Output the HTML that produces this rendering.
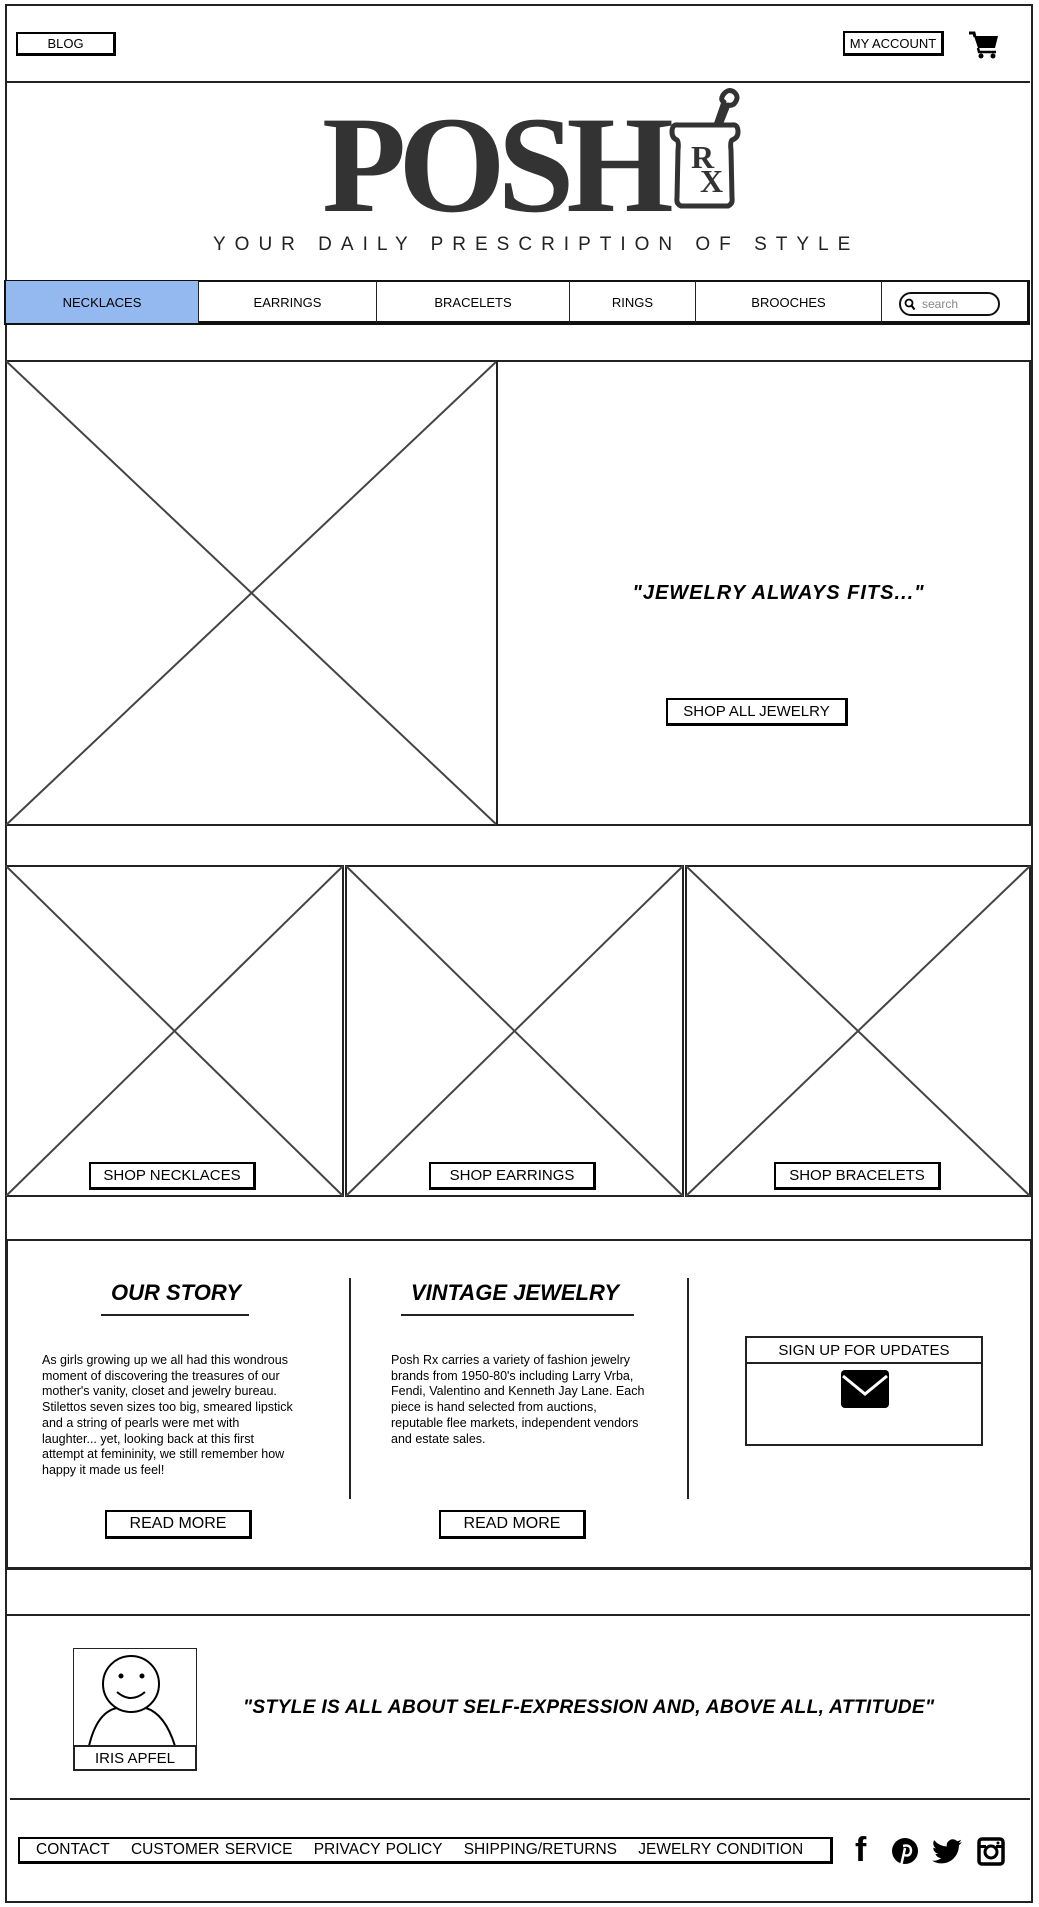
<!DOCTYPE html>
<html><head><meta charset="utf-8"><style>
*{margin:0;padding:0;box-sizing:border-box}
body{width:1039px;height:1907px;background:#fff;position:relative;overflow:hidden;font-family:"Liberation Sans",sans-serif;color:#000}
.a{position:absolute}
.btn{position:absolute;border:2px solid #000;border-right-width:3px;border-bottom-width:3px;background:#fff;display:flex;align-items:center;justify-content:center;font-size:15px;white-space:nowrap}
.box{position:absolute;border:2px solid #222}
.hl{position:absolute;height:2px;background:#222}
.nav{position:absolute;top:281px;height:42px;border-right:1.5px solid #222;display:flex;align-items:center;justify-content:center;font-size:13px}
p.t{position:absolute;font-size:12.5px;line-height:15.7px;white-space:nowrap}
</style></head><body>
<div class="a" style="left:5px;top:4px;width:1028px;height:1899px;border:2px solid #222"></div>

<div class="btn" style="left:16px;top:32px;width:100px;height:24px;font-size:13px">BLOG</div>
<div class="btn" style="left:843px;top:31px;width:101px;height:25px;font-size:13px">MY ACCOUNT</div>
<svg class="a" style="left:968px;top:31px" width="32" height="28" viewBox="0 0 32 28"><path d="M1 2h5l1 4" fill="none" stroke="#000" stroke-width="3"/><path d="M6 5h24l-3 12H10z" fill="#000"/><path d="M10 17l1 4h17" fill="none" stroke="#000" stroke-width="2.5"/><circle cx="13" cy="25" r="2.5" fill="#000"/><circle cx="25" cy="25" r="2.5" fill="#000"/></svg>
<div class="hl" style="left:5px;top:81px;width:1025px"></div>

<div class="a" style="left:322px;top:96px;font-family:'Liberation Serif',serif;font-weight:bold;font-size:138px;line-height:138px;color:#333;letter-spacing:-8px">POSH</div>
<svg class="a" style="left:660px;top:80px" width="100" height="140" viewBox="0 0 100 140">
<path d="M18 45 Q12 44 12 52 Q12 58 17 60 Q19 62 18 70 L17 118 Q16 124 21 126 L68 126 Q73 124 72 118 L71 70 Q70 62 72 60 Q78 58 78 52 Q78 44 72 45 L56 45 L64 22 Q60 20 63 15 Q68 8 74 12 Q80 17 74 24 Q71 26 68 25 L60 45 Z" fill="none" stroke="#333" stroke-width="5" stroke-linejoin="round"/>
<text x="31" y="88" font-family="Liberation Serif,serif" font-weight="bold" font-size="32" fill="#333">R</text>
<text x="40" y="112" font-family="Liberation Serif,serif" font-weight="bold" font-size="32" fill="#333">X</text>
</svg>
<div class="a" style="left:213px;top:234px;font-size:19px;letter-spacing:9px;color:#222;white-space:nowrap">YOUR DAILY PRESCRIPTION OF STYLE</div>

<div class="a" style="left:4px;top:280px;width:1026px;height:45px;border:2px solid #111;border-bottom-width:4px;border-right-width:3px"></div>
<div class="nav" style="left:6px;width:193px;background:#94b9f0">NECKLACES</div>
<div class="nav" style="left:199px;width:178px">EARRINGS</div>
<div class="nav" style="left:377px;width:193px">BRACELETS</div>
<div class="nav" style="left:570px;width:126px">RINGS</div>
<div class="nav" style="left:696px;width:186px">BROOCHES</div>
<div class="a" style="left:899px;top:292px;width:101px;height:24px;border:2px solid #111;border-radius:12px;font-size:12px;color:#888;padding:3px 0 0 21px">search</div>
<svg class="a" style="left:904px;top:298px" width="12" height="13"><circle cx="5" cy="5" r="3.5" fill="none" stroke="#000" stroke-width="1.8"/><path d="M7.5 7.5l3 4" stroke="#000" stroke-width="2"/></svg>

<svg class="a" style="left:0;top:0" width="1039" height="1907">
<g fill="none" stroke="#444" stroke-width="2">
<rect x="6" y="361" width="491" height="464" stroke="#222"/>
<line x1="6" y1="361" x2="497" y2="825"/><line x1="497" y1="361" x2="6" y2="825"/>
<rect x="497" y="361" width="533" height="464" stroke="#222"/>
<rect x="6" y="866" width="337" height="330" stroke="#222"/>
<line x1="6" y1="866" x2="343" y2="1196"/><line x1="343" y1="866" x2="6" y2="1196"/>
<rect x="346" y="866" width="337" height="330" stroke="#222"/>
<line x1="346" y1="866" x2="683" y2="1196"/><line x1="683" y1="866" x2="346" y2="1196"/>
<rect x="686" y="866" width="344" height="330" stroke="#222"/>
<line x1="686" y1="866" x2="1030" y2="1196"/><line x1="1030" y1="866" x2="686" y2="1196"/>
</g></svg>
<div class="a" style="left:497px;top:582px;width:563px;text-align:center;font-size:20px;font-weight:bold;font-style:italic;letter-spacing:1px">"JEWELRY ALWAYS FITS..."</div>
<div class="btn" style="left:666px;top:698px;width:182px;height:28px">SHOP ALL JEWELRY</div>
<div class="btn" style="left:89px;top:1162px;width:167px;height:28px">SHOP NECKLACES</div>
<div class="btn" style="left:429px;top:1162px;width:167px;height:28px">SHOP EARRINGS</div>
<div class="btn" style="left:774px;top:1162px;width:167px;height:28px">SHOP BRACELETS</div>

<div class="box" style="left:6px;top:1239px;width:1026px;height:331px;border-bottom-width:3px"></div>
<div class="a" style="left:76px;top:1280px;width:200px;text-align:center;font-size:22px;font-weight:bold;font-style:italic">OUR STORY</div>
<div class="hl" style="left:101px;top:1314px;width:148px"></div>
<div class="a" style="left:390px;top:1280px;width:250px;text-align:center;font-size:22px;font-weight:bold;font-style:italic">VINTAGE JEWELRY</div>
<div class="hl" style="left:401px;top:1314px;width:233px"></div>
<div class="a" style="left:349px;top:1278px;width:2px;height:221px;background:#222"></div>
<div class="a" style="left:687px;top:1278px;width:2px;height:221px;background:#222"></div>
<p class="t" style="left:42px;top:1353px">As girls growing up we all had this wondrous<br>moment of discovering the treasures of our<br>mother's vanity, closet and jewelry bureau.<br>Stilettos seven sizes too big, smeared lipstick<br>and a string of pearls were met with<br>laughter... yet, looking back at this first<br>attempt at femininity, we still remember how<br>happy it made us feel!</p>
<p class="t" style="left:391px;top:1353px">Posh Rx carries a variety of fashion jewelry<br>brands from 1950-80's including Larry Vrba,<br>Fendi, Valentino and Kenneth Jay Lane. Each<br>piece is hand selected from auctions,<br>reputable flee markets, independent vendors<br>and estate sales.</p>
<div class="btn" style="left:105px;top:1510px;width:147px;height:29px;font-size:16px">READ MORE</div>
<div class="btn" style="left:439px;top:1510px;width:147px;height:29px;font-size:16px">READ MORE</div>
<div class="box" style="left:745px;top:1336px;width:238px;height:110px"></div>
<div class="hl" style="left:745px;top:1362px;width:238px"></div>
<div class="a" style="left:745px;top:1342px;width:238px;text-align:center;font-size:15px">SIGN UP FOR UPDATES</div>
<svg class="a" style="left:841px;top:1370px" width="48" height="38" viewBox="0 0 48 38"><rect x="0" y="0" width="48" height="38" rx="4" fill="#000"/><path d="M2 6 L24 24 L46 6" fill="none" stroke="#fff" stroke-width="3"/></svg>

<div class="hl" style="left:5px;top:1614px;width:1025px"></div>
<div class="box" style="left:73px;top:1648px;width:124px;height:123px;border-width:1.5px"></div>
<svg class="a" style="left:73px;top:1648px" width="124" height="100"><g fill="none" stroke="#000" stroke-width="2"><ellipse cx="58" cy="36" rx="28" ry="28"/><circle cx="48" cy="28" r="1.5" fill="#000"/><circle cx="69" cy="28" r="1.5" fill="#000"/><path d="M44 44 Q58 56 72 44"/><path d="M16 98 Q24 64 44 60"/><path d="M73 60 Q92 66 102 98"/></g></svg>
<div class="box" style="left:73px;top:1745px;width:124px;height:26px;border-width:2px;display:flex;align-items:center;justify-content:center;font-size:15px">IRIS APFEL</div>
<div class="a" style="left:243px;top:1697px;font-size:19.2px;font-weight:bold;font-style:italic;white-space:nowrap;letter-spacing:0.3px">"STYLE IS ALL ABOUT SELF-EXPRESSION AND, ABOVE ALL, ATTITUDE"</div>
<div class="hl" style="left:10px;top:1798px;width:1020px"></div>

<div class="btn" style="left:18px;top:1837px;width:815px;height:27px;justify-content:flex-start;padding-left:16px;font-size:15.5px;word-spacing:1px">CONTACT&nbsp;&nbsp;&nbsp;&nbsp;CUSTOMER SERVICE&nbsp;&nbsp;&nbsp;&nbsp;PRIVACY POLICY&nbsp;&nbsp;&nbsp;&nbsp;SHIPPING/RETURNS&nbsp;&nbsp;&nbsp;&nbsp;JEWELRY CONDITION</div>
<div class="a" style="left:855px;top:1833px;font-size:34px;font-weight:bold;line-height:34px">f</div>
<svg class="a" style="left:891px;top:1837px" width="28" height="30" viewBox="0 0 28 30"><circle cx="14" cy="14" r="13" fill="#000"/><path d="M12 9 Q20 7 20 14 Q19 20 13 18 M14 11 L10 29" stroke="#fff" stroke-width="2.5" fill="none"/></svg>
<svg class="a" style="left:932px;top:1839px" width="30" height="25" viewBox="0 0 24 20"><path d="M24 2.5a10 10 0 0 1-2.8.8A5 5 0 0 0 23.3.6a10 10 0 0 1-3.1 1.200A4.9 4.9 0 0 0 11.8 6 14 14 0 0 1 1.7.9a4.9 4.9 0 0 0 1.5 6.6A4.9 4.9 0 0 1 1 6.9a4.9 4.9 0 0 0 3.9 4.9 5 5 0 0 1-2.2.1 4.9 4.9 0 0 0 4.6 3.4A9.9 9.9 0 0 1 0 17.3 14 14 0 0 0 7.5 19.5c9 0 14-7.5 14-14v-.6A10 10 0 0 0 24 2.5z" fill="#000"/></svg>
<svg class="a" style="left:977px;top:1837px" width="28" height="29" viewBox="0 0 28 29"><rect x="2" y="2" width="24" height="25" rx="3" fill="none" stroke="#000" stroke-width="3.5"/><circle cx="14" cy="15" r="6" fill="none" stroke="#000" stroke-width="3"/><rect x="2" y="8" width="7" height="3" fill="#000"/><rect x="19" y="8" width="7" height="3" fill="#000"/><circle cx="21" cy="6" r="1.5" fill="#000"/></svg>
</body></html>
